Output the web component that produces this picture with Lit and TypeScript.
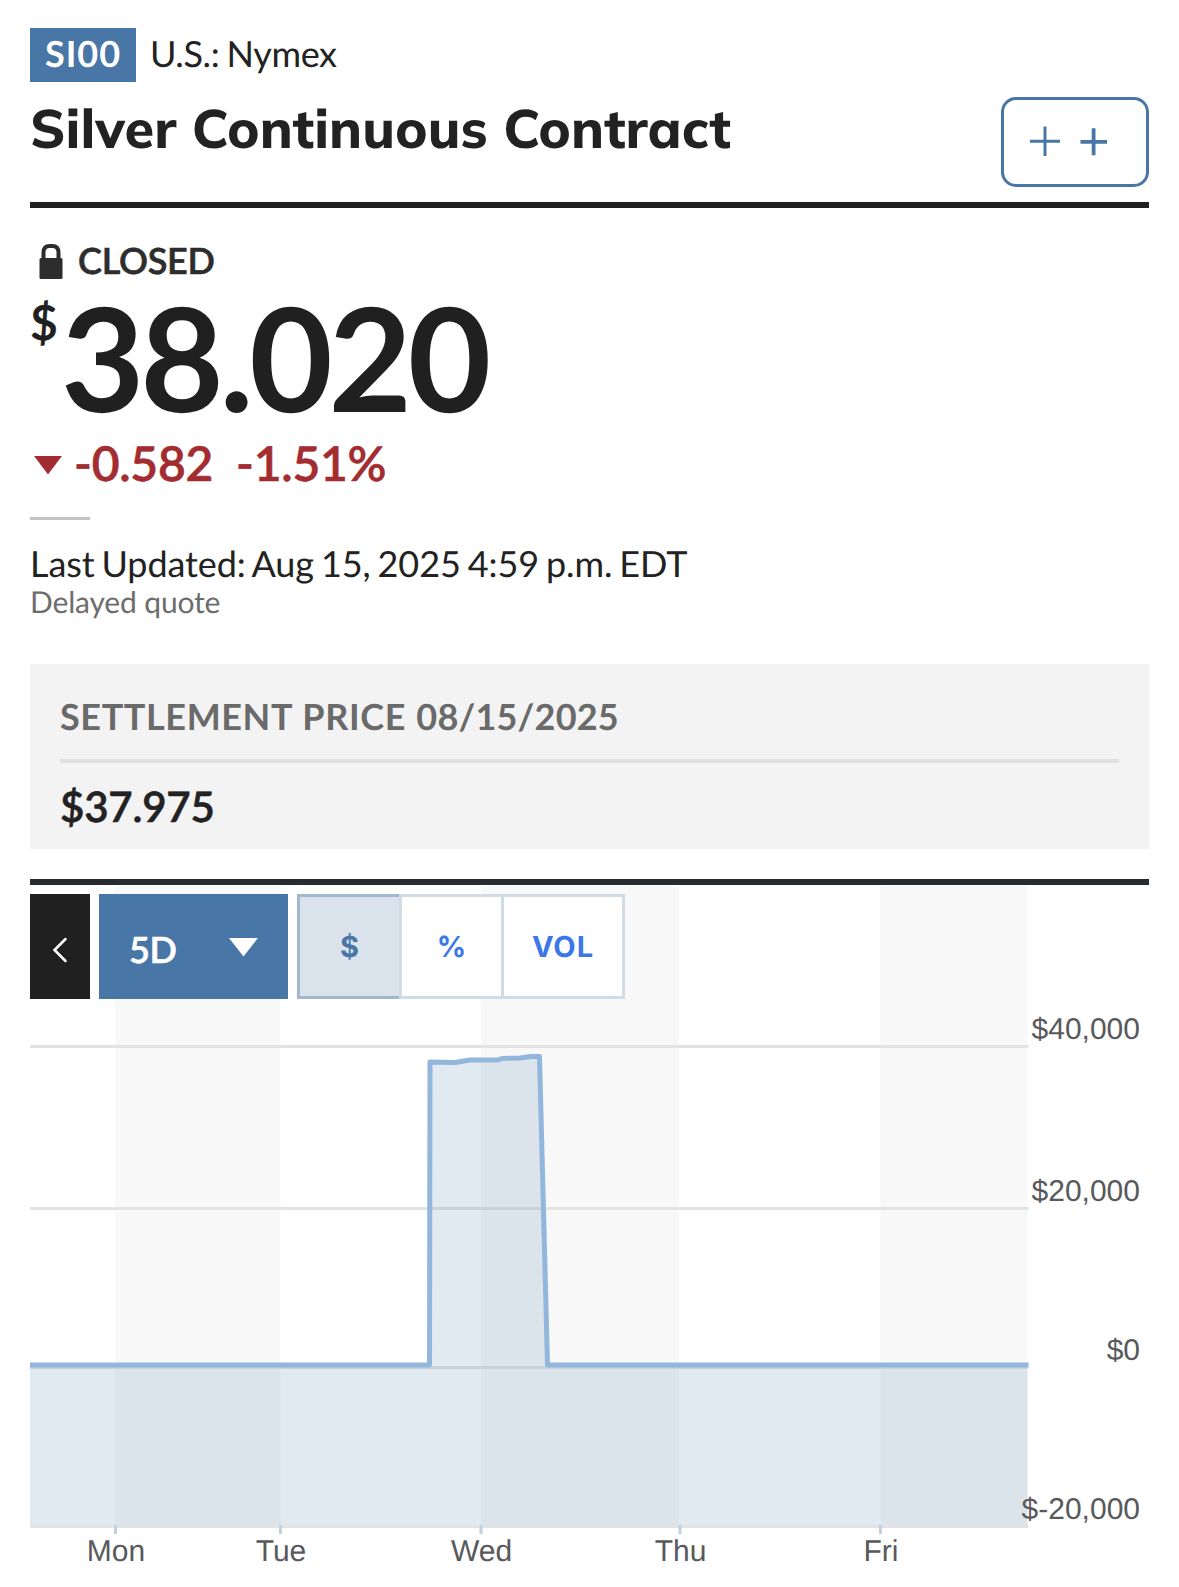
import { LitElement, html, css, svg } from "lit";
import { customElement } from "lit/decorators.js";

const BANDS = [[115, 280.5], [481, 679], [880.5, 1027.5]];
const GRID = [1046.5, 1208.5, 1367.5, 1526.5];
const DAYS: [number, string][] = [[115.5, "Mon"], [280.5, "Tue"], [481, "Wed"], [680, "Thu"], [880.5, "Fri"]];
const PRICES: [number, string][] = [[1039, "$40,000"], [1201, "$20,000"], [1360, "$0"], [1519, "$-20,000"]];
const LINE = "429.5 1365 430 1062 455 1062.5 461 1061.5 470 1060 498 1060 502 1058.5 520 1058 531 1056.5 539.5 1056.5 547.5 1365";

@customElement("price-chart")
export class PriceChart extends LitElement {
  static styles = css`
    :host { display: block; }
    svg { display: block; }
    .label { font: 30px "Liberation Sans", Arial, sans-serif; fill: #58595b; text-rendering: geometricPrecision; }
  `;
  render() {
    return html`<svg width="1179" height="702" viewBox="0 885 1179 702">
      ${BANDS.map(([a, b]) => svg`<rect x=${a} y="886" width=${b - a} height="640" fill="#f8f8f8"/>`)}
      ${GRID.map((y) => svg`<rect x="30" y=${y - 1.5} width="998.5" height="3" fill="#e3e3e3"/>`)}
      <polygon points="30 1365 ${LINE} 1027.5 1365 1027.5 1525 30 1525" fill="#4680a8" fill-opacity=".165"/>
      <polyline points="30 1365 ${LINE} 1028.5 1365" fill="none" stroke="#92b6dc" stroke-width="5" stroke-linejoin="round"/>
      ${DAYS.map(([x, t]) => svg`<rect x=${x - 1.5} y="1525" width="3" height="9" fill="#c3cfdf"/>
        <text class="label" x=${x + 0.5} y="1561" text-anchor="middle">${t}</text>`)}
      ${PRICES.map(([y, t]) => svg`<text class="label" x="1140" y=${y} text-anchor="end">${t}</text>`)}
    </svg>`;
  }
}

@customElement("app-root")
export class AppRoot extends LitElement {
  static styles = css`
    :host { display: block; width: 1179px; height: 1587px; overflow: hidden; background: #fff; color: #222; font-family: Lato, sans-serif; text-rendering: geometricPrecision; }
    * { box-sizing: border-box; }
    .page { padding: 28px 30px 0; }
    .ticker { display: flex; height: 54px; gap: 14px; font-size: 36px; line-height: 51px; white-space: nowrap; }
    .chip { width: 106px; height: 54px; background: #4876a6; color: #fff; font-weight: 700; text-align: center; letter-spacing: 1px; }
    .market { letter-spacing: -.4px; word-spacing: -1.5px; }
    .heading { display: flex; justify-content: space-between; height: 120px; padding-top: 15px; }
    h1 { margin: 0; font: 800 54px/62px Mulish, Muli, Lato, sans-serif; letter-spacing: .06px; white-space: nowrap; }
    .add { width: 148px; height: 90px; border: 3px solid #4876a6; border-radius: 15px; }
    svg { display: block; }
    .rule { height: 6px; background: #202020; }
    .semi { font-weight: 600; -webkit-text-stroke: .6px currentColor; }
    .status { display: flex; height: 76px; padding-top: 36px; gap: 15px; font-size: 36px; line-height: 33px; color: #2d2d2d; letter-spacing: -.25px; }
    .status svg { margin-left: 9px; }
    .price { display: flex; height: 150px; color: #202020; }
    .currency { font-size: 48px; line-height: 48px; padding-top: 15px; width: 31px; }
    .amount { font-size: 144px; line-height: 146px; font-weight: 700; letter-spacing: -4.3px; }
    .change { display: flex; height: 83px; color: #a32c31; font-size: 48px; line-height: 60px; letter-spacing: -.25px; white-space: nowrap; }
    .change svg { margin: 22px 12px 0 4px; }
    .pct { margin-left: 23px; }
    .short { width: 60px; height: 3px; background: #c2c2c2; }
    .updated { margin-top: 22px; font-size: 36px; line-height: 43px; padding-bottom: 1px; letter-spacing: -.08px; word-spacing: -2.2px; white-space: nowrap; }
    .delayed { font-size: 30px; line-height: 32px; color: #6d6d6d; letter-spacing: -.15px; }
    .box { margin-top: 46px; height: 185px; padding: 30px; background: #f3f3f3; }
    .box-title { height: 69px; border-bottom: 4px solid #e0e0e0; color: #6a6a6a; font-size: 36px; line-height: 45px; font-weight: 700; letter-spacing: .6px; word-spacing: 1px; white-space: nowrap; }
    .date { letter-spacing: .2px; }
    .settle { font-size: 42px; line-height: 50px; margin-top: 18px; letter-spacing: -.2px; }
    .rule.dark { margin-top: 30px; background: #282c30; }
    .chart-area { display: grid; }
    .chart-area > * { grid-area: 1 / 1; }
    .controls { z-index: 1; display: flex; gap: 9px; height: 105px; margin: 9px 0 0 30px; }
    .back { width: 60px; background: #202020; }
    .range { display: flex; width: 189px; background: #4876a6; color: #fff; font-size: 36px; line-height: 110px; padding-left: 30px; }
    .range span { width: 99.5px; letter-spacing: -.5px; }
    .range svg { margin: 44px 0 0; }
    .modes { display: flex; width: 328px; font: 700 29px/99px Inter, sans-serif; color: #3b78e7; text-align: center; }
    .mode { background: #fff; border: 3px solid #d1dbe5; border-left: 0; width: 102px; }
    .mode.on { width: 102px; background: #dae2ec; color: #4876a6; border: 3px solid #a1b7d0; border-right: 0; }
    .mode.first { width: 105px; border-left: 3px solid #d1dbe5; }
    .mode.vol { width: 121px; letter-spacing: 1px; }
  `;
  render() {
    return html`
      <div class="page">
        <div class="ticker"><span class="chip">SI00</span><span class="market">U.S.: Nymex</span></div>
        <div class="heading">
          <h1>Silver Continuous Contract</h1>
          <div class="add"><svg width="142" height="84" viewBox="1004 100 142 84" stroke="#4876a6" fill="none">
            <path d="M1030 141.3h30M1045 126.5v29.5" stroke-width="3"/><path d="M1080.5 141.8h26.5M1093.6 128.3v27" stroke-width="3.8"/>
          </svg></div>
        </div>
        <div class="rule"></div>
        <div class="status">
          <svg width="24" height="36" viewBox="39 244 24 36"><path d="M43.5 260V252.5q0-6.500 6-6.500h3q6 0 6 6.500V260" fill="none" stroke="#2d2d2d" stroke-width="4"/><rect x="39.500" y="258" width="23" height="21" rx="1.500" fill="#2d2d2d"/></svg>
          <span class="semi">CLOSED</span>
        </div>
        <div class="price"><span class="currency semi">$</span><span class="amount">38.020</span></div>
        <div class="change semi">
          <svg width="28" height="19"><path d="M0 0H28L14 18.500Z" fill="#a32c31"/></svg>
          <span>-0.582</span><span class="pct">-1.51%</span>
        </div>
        <div class="short"></div>
        <div class="updated">Last Updated: Aug 15, 2025 4:59 p.m. EDT</div>
        <div class="delayed">Delayed quote</div>
        <div class="box">
          <div class="box-title">SETTLEMENT PRICE <span class="date">08/15/2025</span></div>
          <div class="settle semi">$37.975</div>
        </div>
        <div class="rule dark"></div>
      </div>
      <div class="chart-area">
        <price-chart></price-chart>
        <div class="controls">
          <div class="back"><svg width="60" height="105" viewBox="30 894 60 105"><path d="M65.500 939L54.500 950L65.500 961" fill="none" stroke="#fff" stroke-width="2.500" stroke-linecap="round"/></svg></div>
          <div class="range"><span class="semi">5D</span><svg width="29" height="19"><path d="M0 0H29L14.500 18.500Z" fill="#fff"/></svg></div>
          <div class="modes"><span class="mode on">$</span><span class="mode first">%</span><span class="mode vol">VOL</span></div>
        </div>
      </div>`;
  }
}
